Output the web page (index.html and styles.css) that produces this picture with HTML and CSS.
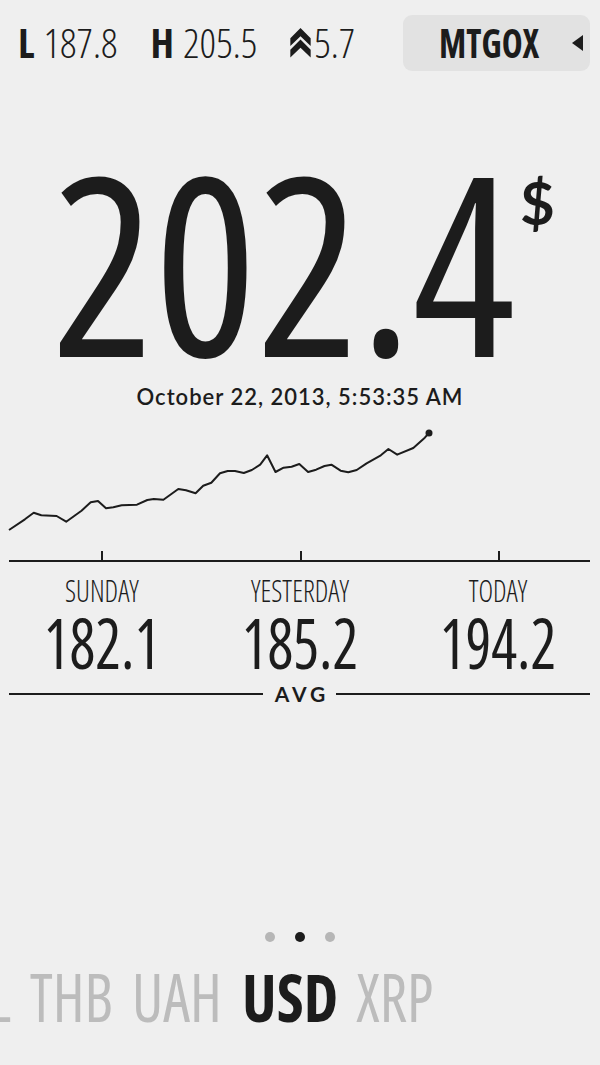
FILE: index.html
```html
<!DOCTYPE html>
<html lang="en">
<head>
    <meta charset="UTF-8">
    <meta name="viewport" content="width=device-width, initial-scale=1.0">
    <title>Bitcoin ticker</title>
    <link rel="stylesheet" href="styles.css">
</head>
<body>
<div class="screen">
    <header class="ticker">
        <div class="ticker_stats">
            <span class="stat"><b>L</b> 187.8</span>
            <span class="stat"><b>H</b> 205.5</span>
            <span class="stat"><svg class="chevrons" viewBox="0 0 21 31" width="21" height="30"><path d="M10.5 0 L21 10.5 L21 18.5 L10.5 8.5 L0 18.5 L0 10.5 Z"/><path d="M10.5 12 L21 22.5 L21 30.5 L10.5 20.5 L0 30.5 L0 22.5 Z"/></svg>5.7</span>
        </div>
        <button type="button" class="market"><span class="market_name">MTGOX</span><span class="caret"></span></button>
    </header>

    <div class="price">
        <span class="price_value">202.4</span>
        <span class="price_currency">$</span>
    </div>
    <div class="stamp">October 22, 2013, 5:53:35 AM</div>

    <svg class="chart" viewBox="0 420 600 143" width="600" height="143">
        <polyline class="chart_line" points="9,530 24.9,519.3 33.7,512.7 41.3,515.3 56.6,516 66.2,521.7 81.5,510.7 90.7,502.3 98,501 106,508.3 113.3,507.3 121.7,505.3 137,504.7 147.3,500 153.8,499 163.4,499.7 178.3,489 186,490.3 195.6,493.3 203.2,485.7 211.3,482.7 220,473.3 227.7,471 235,471 243.8,473 251.8,470 260.2,464.7 267.1,455.3 275.5,472 283.6,467.7 291.6,466.7 299.3,464 308.1,472 316.1,469.7 324.5,466 331.4,464.7 340.6,470.7 348.3,472.3 356.7,470 366.6,463.3 380.8,455.3 388.4,449 397.2,454.7 413.3,448 424.8,437.7 429,433"/>
        <circle cx="429" cy="433" r="3.5" class="chart_dot"/>
        <line x1="9" y1="561" x2="590" y2="561" class="chart_axis"/>
        <line x1="102" y1="551" x2="102" y2="561" class="chart_axis"/>
        <line x1="301" y1="551" x2="301" y2="561" class="chart_axis"/>
        <line x1="499" y1="551" x2="499" y2="561" class="chart_axis"/>
    </svg>

    <div class="averages">
        <div class="day">
            <div class="day_name">SUNDAY</div>
            <div class="day_value">182.1</div>
        </div>
        <div class="day">
            <div class="day_name">YESTERDAY</div>
            <div class="day_value">185.2</div>
        </div>
        <div class="day">
            <div class="day_name">TODAY</div>
            <div class="day_value">194.2</div>
        </div>
    </div>
    <div class="avg">
        <span class="avg_rule"></span>
        <span class="avg_label">AVG</span>
        <span class="avg_rule"></span>
    </div>

    <div class="pager">
        <span class="dot"></span>
        <span class="dot dot_active"></span>
        <span class="dot"></span>
    </div>
    <div class="currencies">
        <span class="currency">BRL</span>
        <span class="currency">THB</span>
        <span class="currency">UAH</span>
        <span class="currency currency_active">USD</span>
        <span class="currency">XRP</span>
    </div>
</div>
</body>
</html>
```
FILE: styles.css
```css
body {
    margin: 0;
    background: #efefef;
    color: #1c1c1c;
}
.screen {
    width: 600px;
    height: 1065px;
    overflow: hidden;
    font-family: "Open Sans", sans-serif;
    font-stretch: 75%;
}
.ticker {
    display: flex;
    align-items: center;
    justify-content: space-between;
    padding: 15px 10px 0 18px;
}
.ticker_stats {
    display: flex;
    align-items: center;
    font-size: 40.6px;
    font-weight: 300;
    line-height: 1;
}
.stat {
    display: flex;
    align-items: center;
    white-space: nowrap;
    margin-right: 33px;
}
.stat b {
    font-weight: 700;
    margin-right: 9px;
}
.chevrons {
    fill: #1c1c1c;
    margin-right: 3px;
}
.market {
    display: flex;
    align-items: center;
    width: 187px;
    height: 56px;
    padding: 0 0 0 36px;
    border: none;
    border-radius: 9px;
    background: #e2e2e2;
    color: #1c1c1c;
    font-family: "Open Sans", sans-serif;
    font-stretch: 75%;
    font-size: 40.6px;
    font-weight: 700;
    line-height: 1;
}
.market_name {
    display: inline-block;
    transform: scaleX(.87);
    transform-origin: left center;
}
.caret {
    width: 0;
    height: 0;
    margin-left: 18px;
    border-top: 8px solid transparent;
    border-bottom: 8px solid transparent;
    border-right: 11px solid #1c1c1c;
}
.price {
    display: flex;
    justify-content: center;
    margin-top: 66px;
}
.price_value {
    display: inline-block;
    font-size: 248px;
    font-weight: 500;
    line-height: 1;
    transform: scaleX(.972);
}
.price_currency {
    margin: 35px 0 0 -2px;
    font-family: "Lato", sans-serif;
    font-size: 60px;
    font-weight: 700;
    line-height: 1;
}
.stamp {
    margin-top: 0.5px;
    text-align: center;
    font-family: "Lato", sans-serif;
    font-size: 22px;
    font-weight: 600;
    letter-spacing: 1px;
    line-height: 1;
}
.chart {
    display: block;
    margin-top: 12.5px;
}
.chart_line {
    fill: none;
    stroke: #1c1c1c;
    stroke-width: 2;
    stroke-linejoin: round;
}
.chart_dot {
    fill: #1c1c1c;
}
.chart_axis {
    stroke: #1c1c1c;
    stroke-width: 2;
}
.averages {
    display: grid;
    grid-template-columns: repeat(3, 198px);
    padding-left: 3px;
    margin-top: 11.5px;
    text-align: center;
}
.day_name {
    font-size: 30.8px;
    font-weight: 300;
    line-height: 1;
    transform: scaleX(.9);
}
.day_value {
    margin-top: 2.6px;
    font-size: 69px;
    font-weight: 400;
    line-height: 1;
    transform: scaleX(.88);
}
.avg {
    display: flex;
    align-items: center;
    padding: 0 10px 0 9px;
    margin-top: 6px;
}
.avg_rule {
    flex: 1;
    height: 2px;
    margin-top: 2px;
    background: #1c1c1c;
}
.avg_label {
    margin: 0 7px 0 12px;
    font-family: "Lato", sans-serif;
    font-size: 21px;
    font-weight: 700;
    letter-spacing: 4px;
    line-height: 1;
}
.pager {
    display: flex;
    justify-content: center;
    gap: 20px;
    margin-top: 228px;
}
.dot {
    width: 10px;
    height: 10px;
    border-radius: 50%;
    background: #b6b6b6;
}
.dot_active {
    background: #1c1c1c;
}
.currencies {
    display: flex;
    gap: 10px;
    margin: 21px 0 0 -67px;
    white-space: nowrap;
    font-size: 67px;
    font-weight: 400;
    line-height: 1;
    color: #bcbcbc;
}
.currency {
    display: inline-block;
    transform: scaleX(.9);
    transform-origin: left center;
}
.currency_active {
    font-weight: 700;
    color: #1c1c1c;
    transform: scaleX(.92);
}
```
